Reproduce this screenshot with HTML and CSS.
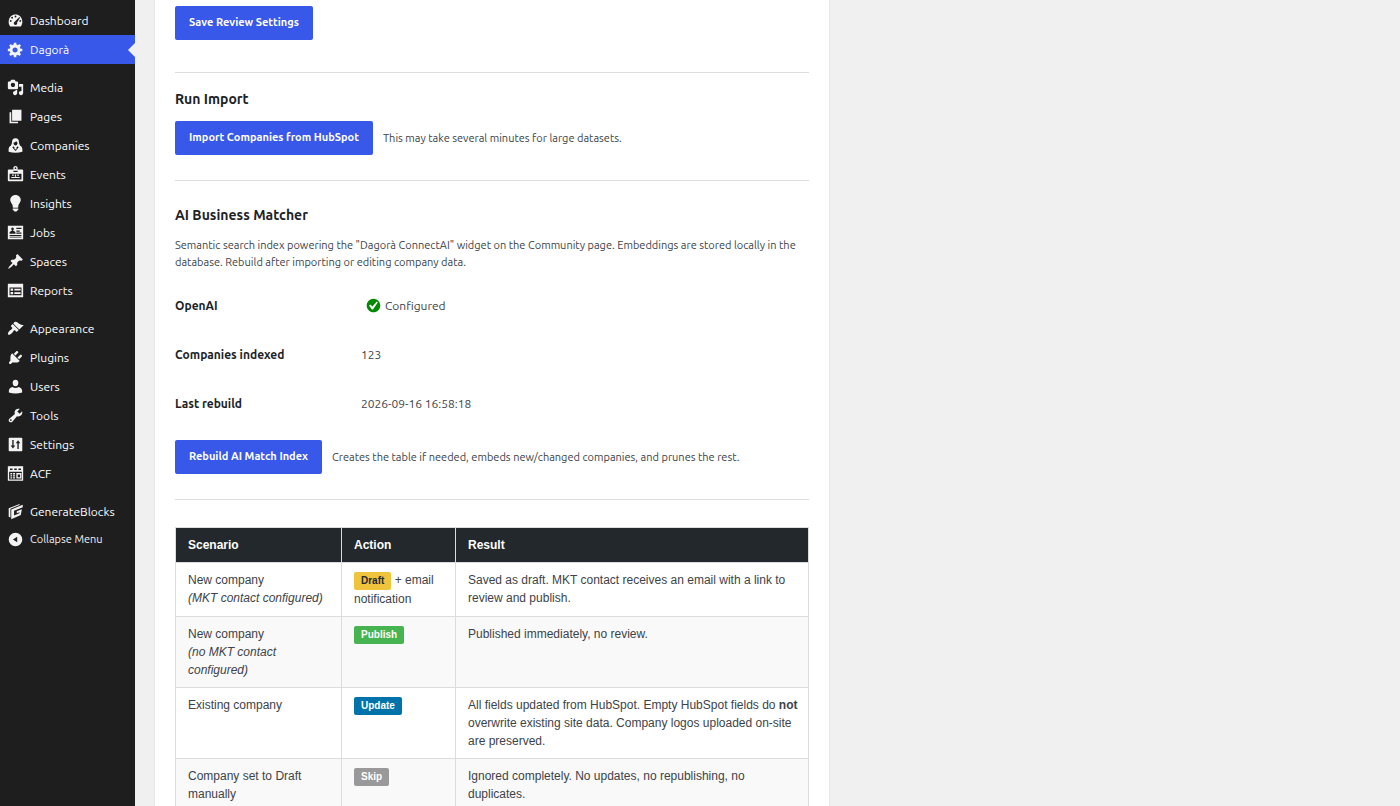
FILE: index.html
```
<!DOCTYPE html>
<html lang="en">
<head>
<meta charset="utf-8">
<title>Dagorà Settings</title>
<link rel="stylesheet" href="styles.css">
</head>
<body>
<div class="layout">
<nav class="sidebar" aria-label="Main menu">
<ul class="menu">
<li><a href="#"><svg viewBox="0 0 20 20"><path fill-rule="evenodd" d="M3.760 17h12.480c1.340-1.630 2.010-3.820 1.760-6C17.600 6.200 14.200 3 10 3 5.800 3 2.400 6.200 2 11c-.25 2.180.42 4.370 1.760 6zM10 4.200a1.100 1.100 0 1 1 0 2.200 1.100 1.100 0 0 1 0-2.200zM6 5.600a1.100 1.100 0 1 1 0 2.200 1.100 1.100 0 0 1 0-2.200zM14.600 6l.7.7-3.400 5.600c.5 1.700-.5 2.900-1.900 2.900-1.600 0-2.500-1.500-1.800-2.800zM4.400 9.400a1.100 1.100 0 1 1 0 2.200 1.100 1.100 0 0 1 0-2.200zM15.600 9.400a1.100 1.100 0 1 1 0 2.200 1.100 1.100 0 0 1 0-2.200z"/></svg>Dashboard</a></li>
<li><a class="current" href="#" aria-current="page"><svg viewBox="0 0 20 20"><path d="M18 12h-2.180c-.17.7-.44 1.350-.81 1.930l1.540 1.540-2.100 2.100-1.540-1.540c-.58.36-1.230.63-1.910.79V19H8v-2.180c-.68-.16-1.330-.43-1.910-.79l-1.540 1.540-2.120-2.120 1.540-1.540c-.36-.58-.63-1.230-.79-1.910H1V9.030h2.170c.16-.7.44-1.350.8-1.940L2.430 5.550l2.100-2.100 1.540 1.540c.58-.37 1.240-.64 1.930-.81V2h3v2.180c.68.16 1.330.43 1.910.79l1.540-1.540 2.120 2.120-1.540 1.540c.36.59.64 1.240.8 1.940H18V12zm-8.500 1.500c1.660 0 3-1.340 3-3s-1.340-3-3-3-3 1.340-3 3 1.340 3 3 3z"/></svg>Dagorà</a></li>
</ul>
<ul class="menu">
<li><a href="#"><svg viewBox="0 0 20 20"><path d="M13 11V4c0-.55-.45-1-1-1h-1.670L9 1H5L3.670 3H2c-.55 0-1 .45-1 1v7c0 .55.45 1 1 1h10c.55 0 1-.45 1-1zM7 4.500c1.380 0 2.500 1.120 2.500 2.500S8.380 9.500 7 9.500 4.500 8.380 4.500 7 5.620 4.500 7 4.500zM14 6h5v10.500c0 1.380-1.120 2.500-2.500 2.500S14 17.880 14 16.500s1.120-2.500 2.500-2.500c.17 0 .34.02.5.05V9h-3V6zm-4 8.050V13h2v3.500c0 1.380-1.120 2.500-2.500 2.500S7 17.880 7 16.500 8.120 14 9.500 14c.17 0 .34.02.5.05z"/></svg>Media</a></li>
<li><a href="#"><svg viewBox="0 0 20 20"><path d="M6 15V2h11v13H6zm-1 1.200h8V18H3V5h2v11.200z"/></svg>Pages</a></li>
<li><a href="#"><svg viewBox="0 0 20 20"><path fill-rule="evenodd" d="M10 1.500c3 0 4 2 4.100 4.300.1 2 .6 2.900 1.400 4.400 1.700.8 2.600 2.300 2.600 4.300v2.800c-5 1.600-11.200 1.600-16.200 0v-2.800c0-2 .9-3.500 2.600-4.300.8-1.500 1.300-2.400 1.400-4.400.1-2.300 1.100-4.300 4.100-4.300zm.8 3.200C10 5.900 8.800 6.400 7.600 6.700c.1 2 1 3.300 2.400 3.300s2.400-1.300 2.500-3.200c-.8-.4-1.400-1.100-1.700-2.100zM7.200 10.800l-.8 1.500 3.600 4.200 3.600-4.200-.8-1.500-1.800 1.600.3 1.300-1.300 1-1.300-1 .3-1.300z"/></svg>Companies</a></li>
<li><a href="#"><svg viewBox="0 0 20 20"><path fill-rule="evenodd" d="M10 0c1.700 0 2.600 1.200 2.600 2.600 0 .6-.2 1.100-.5 1.500H18c.6 0 1 .4 1 1V17c0 .6-.4 1-1 1H2c-.6 0-1-.4-1-1V5.100c0-.6.4-1 1-1h5.900c-.3-.4-.5-.9-.5-1.500C7.400 1.200 8.300 0 10 0zm0 1.500a1 1 0 1 0 0 2 1 1 0 0 0 0-2zM7.500 5.500V7h5V5.500zM3 9v7h14V9z"/><path d="M6 10h2v1.500H6zm6 0h2v1.500h-2zM9.300 10h1.400v2.500H9.300zM5 13h10v1.200H5z"/></svg>Events</a></li>
<li><a href="#"><svg viewBox="0 0 20 20"><path d="M10 0c3.500 0 6.200 2.700 6.200 6 0 2-2.200 4.900-2.200 4.900-.4.500-.7 1.500-.7 2.100v1c0 .6-.5 1-1.100 1H7.800c-.6 0-1.100-.4-1.100-1v-1c0-.6-.3-1.600-.7-2.100 0 0-2.200-2.900-2.200-4.900 0-3.300 2.700-6 6.200-6zM6.700 16h6.600v.8c0 .7-.2 1.200-.9 1.200h-.3c0 .8-.5 1.400-1.100 1.400H9c-.7 0-1.100-.6-1.100-1.400h-.3c-.7 0-.9-.5-.9-1.200z"/></svg>Insights</a></li>
<li><a href="#"><svg viewBox="0 0 20 20"><path fill-rule="evenodd" d="M1 2h18v16H1zm10 2.500V6h6V4.500zM11 7.500V9h4V7.500zm0 2.500v1.500h6V10zM3 13v1h14v-1zm0 2v1h14v-1zM6.500 4C5.300 4 4.800 5 5 6c.1.900.6 1.700 1 2-1.400.3-3 1-3 2.200v1.300h7v-1.300C10 9 8.400 8.300 7 8c.4-.3.900-1.100 1-2 .2-1-.3-2-1.500-2z"/></svg>Jobs</a></li>
<li><a href="#"><svg viewBox="0 0 20 20"><path d="M10.440 3.020l1.820-1.820 6.360 6.350-1.830 1.820c-1.050-.68-2.480-.57-3.410.36l-.75.75c-.92.93-1.040 2.350-.35 3.410l-1.830 1.820-2.410-2.410-2.800 2.790c-.42.42-3.380 2.710-3.800 2.290s1.860-3.390 2.280-3.810l2.790-2.790L4.100 9.360l1.830-1.820c1.050.69 2.480.57 3.400-.36l.75-.75c.93-.92 1.050-2.350.36-3.410z"/></svg>Spaces</a></li>
<li><a href="#"><svg viewBox="0 0 20 20"><path fill-rule="evenodd" d="M1 2h18v16H1zm2 4.500v9h14v-9z"/><path d="M4.200 7.600h3v2.600h-3zm0 4.200h3v2.600h-3zM8.600 8H16v1.900H8.600zm0 4.100H16V14H8.600z"/></svg>Reports</a></li>
</ul>
<ul class="menu">
<li><a href="#"><svg viewBox="0 0 20 20"><path d="M14.480 11.060L7.410 3.990l1.500-1.500c.5-.56 2.300-.47 3.510.32 1.210.8 1.430 1.280 2.910 2.100 1.180.64 2.450 1.260 4.450.85zm-.71.71L6.700 4.700 4.930 6.470c-.39.39-.39 1.020 0 1.410l1.060 1.060c.39.39.39 1.030 0 1.420-.6.6-1.430 1.110-2.210 1.690-.35.26-.7.53-1.010.84C1.430 14.230.4 16.080 1.400 17.070c.99 1 2.840-.03 4.180-1.360.31-.31.58-.66.85-1.020.57-.78 1.080-1.610 1.690-2.210.39-.39 1.020-.39 1.410 0l1.060 1.060c.39.39 1.020.39 1.410 0z"/></svg>Appearance</a></li>
<li><a href="#"><svg viewBox="0 0 20 20"><path d="M13.110 4.360L9.870 7.600 8 5.730l3.240-3.240c.35-.34 1.050-.2 1.560.32.52.51.66 1.210.31 1.550zm-8 1.770l.91-1.120 9.010 9.010-1.190.84c-.71.71-2.630 1.160-3.820 1.160H6.140L4.900 17.260c-.59.59-1.540.59-2.120 0-.59-.58-.59-1.530 0-2.120l1.240-1.240v-3.880c0-1.130.4-3.190 1.090-3.890zm7.260 3.970l3.240-3.240c.34-.35 1.040-.21 1.550.31.52.51.66 1.210.31 1.550l-3.240 3.250z"/></svg>Plugins</a></li>
<li><a href="#"><svg viewBox="0 0 20 20"><path d="M10 9.800c-2.500 0-3.200-2-3.300-3.900C6.500 3.700 7.600 2 10 2s3.500 1.700 3.300 3.900c-.1 1.900-.8 3.900-3.300 3.900zm-3.500.7c2 1.500 5 1.500 7 0 2.400.3 4.300 2.200 4.300 4.400v2.300c-5 1.500-10.600 1.500-15.600 0v-2.300c0-2.200 1.900-4.100 4.300-4.400z"/></svg>Users</a></li>
<li><a href="#"><svg viewBox="0 0 20 20"><path d="M16.680 9.770c-1.340 1.340-3.300 1.670-4.950.99l-5.410 6.520c-.99.99-2.590.99-3.580 0s-.99-2.590 0-3.570l6.520-5.420c-.68-1.650-.35-3.610.99-4.950 1.280-1.280 3.120-1.620 4.720-1.060l-2.890 2.890 2.820 2.820 2.860-2.870c.53 1.580.18 3.390-1.080 4.650zM3.810 16.210c.4.39 1.040.39 1.430 0 .4-.4.4-1.040 0-1.430-.39-.4-1.030-.4-1.430 0-.39.39-.39 1.030 0 1.430z"/></svg>Tools</a></li>
<li><a href="#"><svg viewBox="0 0 20 20"><path fill-rule="evenodd" d="M3 2h14c.6 0 1 .4 1 1v14c0 .6-.4 1-1 1H3c-.6 0-1-.4-1-1V3c0-.6.4-1 1-1zm3.200 2.800v6.400H4.300L7 14.800l2.700-3.600H7.800V4.800zM13 5l-2.700 3.600h1.900v6.600h1.600V8.600h1.900z"/></svg>Settings</a></li>
<li><a href="#"><svg viewBox="0 0 20 20"><path fill-rule="evenodd" d="M1 1.500h18v17H1zM2.500 3v14h15V3z"/><path fill-rule="evenodd" d="M2 2h16v6H2zm1.500 2.200v1.600h3V4.200zm5 0v1.600h3V4.200zm5 0v1.600h3V4.200zM4 9.500h2v1.600H4zm3 0h2.500v1.600H7zM4 12h2v1.600H4zm3 0h2.500v1.600H7zm-3 2.500h2V16H4zm3 0h2.500V16H7zM11 9.500h6V16h-6zm1.600 1.600v3.300h2.800v-3.300z"/></svg>ACF</a></li>
</ul>
<ul class="menu">
<li><a href="#"><svg viewBox="0 0 20 20"><path d="M2 6.300L14 1.500l1.500.5L4 6.800v10.400l-2-1z"/><path d="M5 7.500L18.500 2v3L8.300 9.200v5.500l6.400-2.500V11l-3.200 1.200V9.700l6-2.400-1.300 6.800L5 19z"/></svg>GenerateBlocks</a></li>
<li><button class="collapse" type="button"><svg viewBox="0 0 20 20"><path fill-rule="evenodd" d="M10 2a8 8 0 1 1 0 16 8 8 0 0 1 0-16zm2 4.800L7 10l5 3.200z"/></svg>Collapse Menu</button></li>
</ul>
</nav>
<main class="content">
<div class="panel">
<button class="primary" type="button">Save Review Settings</button>
<hr class="after-save">
<section class="import">
<h2>Run Import</h2>
<div class="action-row"><button class="primary" type="button">Import Companies from HubSpot</button><span class="note">This may take several minutes for large datasets.</span></div>
</section>
<hr>
<section class="matcher">
<h2>AI Business Matcher</h2>
<p class="note">Semantic search index powering the "Dagorà ConnectAI" widget on the Community page. Embeddings are stored locally in the database. Rebuild after importing or editing company data.</p>
<table class="status">
<tr><th scope="row">OpenAI</th><td><span class="configured"><svg viewBox="0 0 20 20"><path d="M10 2c-4.420 0-8 3.580-8 8s3.580 8 8 8 8-3.580 8-8-3.580-8-8-8zm-.615 12.660h-1.340l-3.240-4.540 1.341-1.250 2.569 2.400 5.141-5.931 1.340.94z"/></svg>Configured</span></td></tr>
<tr><th scope="row">Companies indexed</th><td>123</td></tr>
<tr><th scope="row">Last rebuild</th><td>2026-09-16 16:58:18</td></tr>
</table>
<div class="action-row"><button class="primary" type="button">Rebuild AI Match Index</button><span class="note">Creates the table if needed, embeds new/changed companies, and prunes the rest.</span></div>
</section>
<hr>
<table class="rules">
<colgroup><col class="col-scenario"><col class="col-action"><col></colgroup>
<thead><tr><th scope="col">Scenario</th><th scope="col">Action</th><th scope="col">Result</th></tr></thead>
<tbody>
<tr><td>New company<br><em>(MKT contact configured)</em></td><td><span class="badge draft">Draft</span> + email notification</td><td>Saved as draft. MKT contact receives an email with a link to review and publish.</td></tr>
<tr><td>New company<br><em>(no MKT contact configured)</em></td><td><span class="badge publish">Publish</span></td><td>Published immediately, no review.</td></tr>
<tr><td>Existing company</td><td><span class="badge update">Update</span></td><td>All fields updated from HubSpot. Empty HubSpot fields do <strong>not</strong> overwrite existing site data. Company logos uploaded on-site are preserved.</td></tr>
<tr><td>Company set to Draft manually</td><td><span class="badge skip">Skip</span></td><td>Ignored completely. No updates, no republishing, no duplicates.</td></tr>
</tbody>
</table>
</div>
</main>
</div>
</body>
</html>
```
FILE: styles.css
```
* { box-sizing: border-box; }

body {
  margin: 0;
  height: 100vh;
  overflow: hidden;
  background: #f0f0f0;
  color: #3c434a;
  font: 12px/18px Ubuntu, "Noto Sans", sans-serif;
}

button { font: inherit; border: 0; cursor: pointer; }

.layout {
  display: flex;
  min-height: 100vh;
}

.sidebar {
  flex: 0 0 135px;
  padding-top: 6px;
  background: #1e1e1e;
}

.menu {
  list-style: none;
  margin: 0 0 9px;
  padding: 0;
}

.menu a,
.collapse {
  position: relative;
  display: flex;
  align-items: center;
  gap: 6px;
  width: 100%;
  height: 29px;
  padding: 0 7px;
  background: none;
  color: #fff;
  text-decoration: none;
}

.menu svg {
  flex: none;
  width: 17px;
  height: 17px;
  fill: #f3f3f3;
}

.menu .current { background: #3858e9; }

.menu .current::after {
  content: "";
  position: absolute;
  right: 0;
  top: 50%;
  margin-top: -7px;
  border: 7px solid transparent;
  border-left-width: 0;
  border-right-color: #f0f0f0;
}

.menu .collapse {
  height: 26px;
  font-size: 11px;
  color: #f0f0f0;
}

.content {
  flex: 1;
  padding-left: 19px;
}

.panel {
  max-width: 676px;
  min-height: 100%;
  padding: 6px 20px 20px;
  background: #fff;
  border: solid #e6e6e6;
  border-width: 0 1px;
}

.primary {
  height: 34px;
  padding: 0 14px 2px;
  border-radius: 2px;
  background: #3858e9;
  color: #fff;
  font-size: 11px;
  font-weight: 600;
}

hr {
  margin: 25px 0 24px;
  border: 0;
  border-top: 1px solid #dcdcde;
}

.after-save { margin: 32px 0 16px; }

h2 {
  margin: 0 0 12px;
  color: #1d2327;
  font-size: 14px;
  line-height: 20px;
  font-weight: 600;
}

.action-row {
  display: flex;
  align-items: center;
  gap: 10px;
}

.note {
  margin: 0;
  font-size: 11px;
  line-height: 17px;
}

.status {
  width: 100%;
  margin: 10px 0 12px;
  border-collapse: collapse;
}

.status th,
.status td {
  padding: 0;
  height: 49px;
  text-align: left;
}

.status th {
  width: 186px;
  color: #1d2327;
  font-weight: 600;
}

.configured {
  display: flex;
  align-items: center;
  gap: 3px;
  padding-left: 4px;
}

.configured svg {
  width: 17px;
  height: 17px;
  fill: #008a00;
}

.rules {
  width: 100%;
  margin-top: 27px;
  border-collapse: collapse;
  table-layout: fixed;
  font-family: "Liberation Sans", Arial, sans-serif;
}

.col-scenario { width: 166px; }
.col-action { width: 114px; }

.rules th,
.rules td {
  padding: 8px 8px 8px 12px;
  border: 1px solid #dcdcde;
  text-align: left;
  vertical-align: top;
}

.rules th {
  background: #23282d;
  color: #fff;
}

.rules tbody tr:nth-child(even) { background: #f9f9f9; }

.badge {
  display: inline-block;
  padding: 0 7px;
  border-radius: 2px;
  color: #fff;
  font-size: 10px;
  line-height: 18px;
  font-weight: bold;
}

.draft { background: #f0c33c; color: #23282d; }
.publish { background: #46b450; }
.update { background: #0073aa; }
.skip { background: #999; }
```
